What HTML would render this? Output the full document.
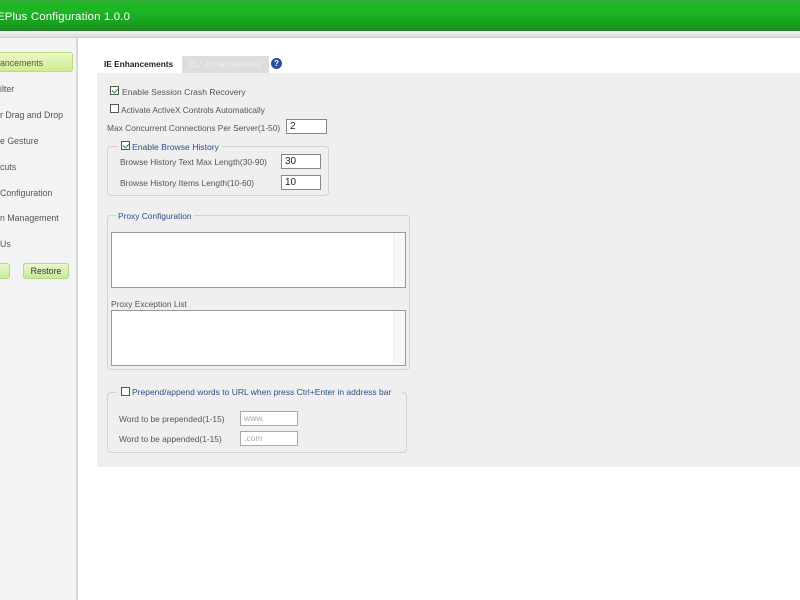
<!DOCTYPE html>
<html><head><style>
*{margin:0;padding:0;box-sizing:border-box}
body{width:800px;height:600px;position:relative;overflow:hidden;background:#fff;font-family:"Liberation Sans",Arial,sans-serif;font-size:8.6px;color:#333}
.a{position:absolute}
#hdr{left:0;top:0;width:800px;height:31px;background:linear-gradient(#4aa54a 0,#1fb824 2px,#1db523 40%,#17961d 90%,#2f7a2f 100%)}
#hdr span{position:absolute;left:-3px;top:11px;color:#fff;font-size:11.3px;letter-spacing:0.2px}
#strip{left:0;top:31px;width:800px;height:7px;background:linear-gradient(#f6f6f6,#ddd 80%,#c8c8c8)}
#side{left:0;top:38px;width:78px;height:562px;background:#f3f3f3;border-right:2px solid #d8d8d8}
.it{position:absolute;left:0;font-size:8.8px;color:#555}
#sel{left:-4px;top:52px;width:77px;height:20px;background:linear-gradient(#eaf7c8,#cfec8e);border:1px solid #bcdc7a;border-radius:3px}
.btn{position:absolute;top:263px;height:16px;background:linear-gradient(#eaf7d0,#c9e89a);border:1px solid #b6d88a;border-radius:3px;font-size:8.8px;text-align:center;line-height:14px;color:#333}
#panel{left:97px;top:73px;width:703px;height:394px;background:#efefef}
.tab{position:absolute;top:56px;height:17px;line-height:17px;font-size:8.5px}
.cb{position:absolute;width:9px;height:9px;border:1px solid #555;background:#fff}
.cb.on::after{content:"";position:absolute;left:2px;top:0px;width:3px;height:5px;border:solid #2a8a2a;border-width:0 1.5px 1.5px 0;transform:rotate(45deg)}
.t{position:absolute;white-space:nowrap;color:#555}
.in{position:absolute;background:#fff;border:1px solid #888;font-size:10px;padding-left:3px;line-height:13px;color:#222}
.grp{position:absolute;border:1px solid #d2d2d2;border-radius:4px}
.ta{position:absolute;background:#fff;border:1px solid #999}
.ta::after{content:"";position:absolute;right:0;top:0;width:11px;height:100%;background:#f7f7f7;border-left:1px solid #eee}
.blue{color:#2c4f8a !important}
</style></head><body>
<div id="hdr" class="a"><span>EPlus Configuration 1.0.0</span></div>
<div id="strip" class="a"></div>
<div id="side" class="a"></div>
<div id="sel" class="a"></div>
<div class="it" style="top:58px">ancements</div>
<div class="it" style="top:84px">ilter</div>
<div class="it" style="top:110px">r Drag and Drop</div>
<div class="it" style="top:136px">e Gesture</div>
<div class="it" style="top:162px">cuts</div>
<div class="it" style="top:188px">Configuration</div>
<div class="it" style="top:213px">n Management</div>
<div class="it" style="top:239px">Us</div>
<div class="btn" style="left:-4px;width:14px"></div>
<div class="btn" style="left:23px;width:46px">Restore</div>

<div id="panel" class="a"></div>
<div class="tab" style="left:97px;width:82px;background:#fff;font-weight:bold;color:#222;padding-left:7px;font-size:8.3px">IE Enhancements</div>
<div class="tab" style="left:182px;width:87px;background:#ddd;color:#eee;text-align:center">IE7 Enhancements</div>
<div class="a" style="left:271px;top:58px;width:11px;height:11px;border-radius:50%;background:#2a4f9a;color:#fff;font-size:8px;font-weight:bold;text-align:center;line-height:11px">?</div>

<div class="cb on" style="left:110px;top:86px"></div><div class="t" style="left:122px;top:87px">Enable Session Crash Recovery</div>
<div class="cb" style="left:110px;top:104px"></div><div class="t" style="left:121px;top:105px;font-size:8.3px">Activate ActiveX Controls Automatically</div>
<div class="t" style="left:107px;top:123px;font-size:8.4px">Max Concurrent Connections Per Server(1-50)</div>
<div class="in" style="left:286px;top:119px;width:41px;height:15px">2</div>

<div class="grp" style="left:107px;top:146px;width:222px;height:50px"></div>
<div class="a" style="left:118px;top:141px;width:104px;height:10px;background:#efefef"></div>
<div class="cb on" style="left:121px;top:141px"></div><div class="t blue" style="left:132px;top:142px">Enable Browse History</div>
<div class="t" style="left:120px;top:157px;font-size:8.4px">Browse History Text Max Length(30-90)</div>
<div class="in" style="left:281px;top:154px;width:40px;height:15px">30</div>
<div class="t" style="left:120px;top:178px;font-size:8.4px">Browse History Items Length(10-60)</div>
<div class="in" style="left:281px;top:175px;width:40px;height:15px">10</div>

<div class="grp" style="left:107px;top:215px;width:303px;height:155px"></div>
<div class="a" style="left:116px;top:210px;width:78px;height:10px;background:#efefef"></div>
<div class="t blue" style="left:118px;top:211px;font-size:8.4px">Proxy Configuration</div>
<div class="ta" style="left:111px;top:232px;width:295px;height:56px"></div>
<div class="t" style="left:111px;top:299px;font-size:8.4px">Proxy Exception List</div>
<div class="ta" style="left:111px;top:310px;width:295px;height:56px"></div>

<div class="grp" style="left:107px;top:392px;width:300px;height:61px"></div>
<div class="a" style="left:117px;top:386px;width:285px;height:10px;background:#efefef"></div>
<div class="cb" style="left:121px;top:387px"></div><div class="t blue" style="left:132px;top:387px;font-size:8.5px">Prepend/append words to URL when press Ctrl+Enter in address bar</div>
<div class="t" style="left:119px;top:414px;font-size:8.4px">Word to be prepended(1-15)</div>
<div class="in" style="left:240px;top:411px;width:58px;height:15px;color:#aaa;font-size:8.5px;border-color:#aaa">www.</div>
<div class="t" style="left:119px;top:434px;font-size:8.4px">Word to be appended(1-15)</div>
<div class="in" style="left:240px;top:431px;width:58px;height:15px;color:#aaa;font-size:8.5px;border-color:#aaa">.com</div>
</body></html>
